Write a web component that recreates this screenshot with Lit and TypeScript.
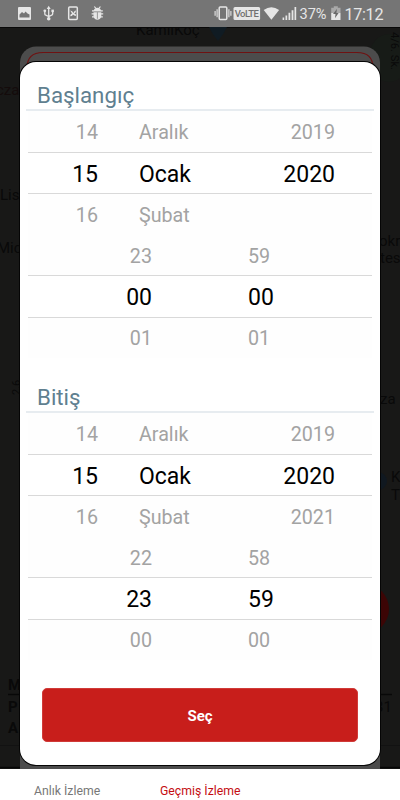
import { LitElement, html, css } from "lit";
import { customElement } from "lit/decorators.js";

@customElement("status-bar")
class StatusBar extends LitElement {
  static styles = css`
    :host { display: block; height: 27px; background: #757575; }
    svg { display: block; }
    text { font-family: Roboto, sans-serif; fill: #e6e6e6; }
  `;
  render() {
    return html`<svg width="400" height="27" viewBox="0 0 400 27" fill="#e6e6e6">
      <path fill-rule="evenodd" d="M19 7h11q1 0 1 1v11q0 1-1 1H19q-1 0-1-1V8q0-1 1-1zM19.5 17.5h10v-3l-2-1-2-2-1.5 2-2-1.5-2.5 2.5z" />
      <g fill="none" stroke="#e6e6e6" stroke-width="1.3">
        <path d="M48.7 8v10M44.8 11v3q0 1 1 1.2l2.9 1.3 3-1.4q1-.4 1-1.4v-2.4" />
      </g>
      <path d="M48.7 5.8l2 3.2h-4z" /><circle cx="48.7" cy="18.8" r="1.8" />
      <circle cx="44.8" cy="10.8" r="1.4" /><path d="M51.4 9.6h2.5v2.5h-2.5z" />
      <rect x="68.7" y="6.9" width="8.6" height="12.6" rx="1" fill="none" stroke="#e6e6e6" stroke-width="1.5" />
      <path d="M70.2 10.6l2 .6 1.2 1.8 1.2-2 1.4-.4-.4 1.8-1.4 1.2 1.6.6.2 1.8-1.8-.4-1.2-1.2-1 1.6-1.8.2.4-1.8 1.4-1z" />
      <path d="M93.6 11.4q.4-3.6 3.8-3.6t3.8 3.6zM93.5 12.2h7.8v3.6q-.5 3.9-3.9 3.9t-3.9-3.9z" />
      <path d="M92 10.8h2M100.8 10.8h2M91.6 13.8h11.6M92 16.8h10.8M94.4 6.5l1.4 1.8M100.4 6.5l-1.4 1.8" stroke="#e6e6e6" stroke-width="1.2" />
      <path d="M97.4 12.2v6.6" stroke="#757575" stroke-width=".7" />

      <rect x="219.2" y="7" width="7.6" height="12.6" rx="1" fill="none" stroke="#e6e6e6" stroke-width="1.5" />
      <path d="M217.1 9.2v8M215.1 11v4.8M228.9 9.2v8M230.9 11v4.8" stroke="#e6e6e6" stroke-width="1.1" />
      <rect x="233.5" y="7" width="26.6" height="13" rx="1.5" />
      <text x="246.8" y="16.9" text-anchor="middle" font-size="9.5" font-weight="500" textLength="24" style="fill:#707070">VoLTE</text>
      <path d="M263.7 10q7.7-5.6 15.4 0l-7.7 9.8z" />
      <path d="M282.6 17.6h1.6V20h-1.6zM285.5 15.4h1.7V20h-1.7zM288.5 12.8h1.8V20h-1.8zM291.6 10.2h1.8V20h-1.8zM294.5 7h1.7v13h-1.7z" />
      <text x="299.5" y="19.2" font-size="14.8" textLength="27" lengthAdjust="spacingAndGlyphs">37%</text>
      <path d="M333.8 6.3h4v1.5h2.7V13h-9.3V7.8h2.6z" fill="#a9a9a9" />
      <path d="M331.2 13h9.3v7h-9.3z" />
      <path d="M337 8.8l-4 5.1h2.5l-.5 4.3 3.6-5.3h-2.2z" fill="#686868" />
      <text x="344.5" y="19.6" font-size="16.2" textLength="39">17:12</text>
    </svg>`;
  }
}

@customElement("wheel-picker")
class WheelPicker extends LitElement {
  static properties = { rows: { attribute: false }, kind: {} };
  declare rows: string[][];
  declare kind: string;
  static styles = css`
    :host { display: block; margin: 0 8px 0 8px; }
    .row { height: 41.2px; box-sizing: border-box; display: grid; align-items: center; color: #a3a3a3; font-size: 19.7px; line-height: 24px; padding-top: 4px; background: #fefefe; }
    .date { grid-template-columns: 70px 1fr 100px 37px; }
    .time { grid-template-columns: 124px 1fr; }
    .row > span:first-child { text-align: right; }
    .date > span:nth-child(2) { padding-left: 41px; }
    .date > span:nth-child(3) { text-align: right; }
    .time > span:nth-child(2) { padding-left: 96px; }
    .selected { position: relative; height: 42.2px; margin-bottom: -1px; color: #000; font-size: 23px; background: #fff; padding-top: 4px; border-top: 1px solid #d9d9d9; border-bottom: 1px solid #d9d9d9; }
  `;
  render() {
    return this.rows.map((r, i) => html`<div class="row ${this.kind} ${i === 1 ? "selected" : ""}">${r.map((c) => html`<span>${c}</span>`)}</div>`);
  }
}

@customElement("app-root")
class AppRoot extends LitElement {
  static styles = css`
    :host { display: flex; flex-direction: column; width: 400px; height: 800px; overflow: hidden; font-family: Roboto, "Noto Sans", sans-serif; background: #fff; }
    .stage { position: relative; height: 742px; background: #181817; overflow: hidden; box-sizing: border-box; padding: 35px 20px 4px; }
    .map { position: absolute; left: 0; top: 0; }
    .map text { fill: #090909; font-family: Roboto, sans-serif; font-size: 15px; }
    .dialog { position: relative; height: 703px; box-sizing: border-box; background: #fff; border-radius: 16px; box-shadow: 0 0 0 1px #050505; padding-top: 16.6px; }
    h2 { margin: 0 6px; padding-left: 11px; height: 30px; line-height: 32px; font-size: 22.3px; font-weight: 400; color: #607f90; border-bottom: 2px solid #e7ecf0; }
    .range { height: 302px; }
    .select { display: block; margin: 5px 22px 0; width: 316px; height: 54px; padding: 2px 0 0; border: 1px solid #d03a38; border-radius: 5px; background: #c81e1b; color: #fff; font: 700 15px Roboto, sans-serif; }
    nav { height: 31px; display: flex; padding-left: 34px; padding-top: 14px; box-sizing: border-box; font-size: 12.25px; line-height: 16px; color: #777; background: #fff; }
    nav span { width: 126px; white-space: nowrap; }
    .active { color: #c40d12; }
  `;
  render() {
    return html`
      <status-bar></status-bar>
      <main class="stage">
        <svg class="map" width="400" height="742" viewBox="0 27 400 742">
          <path d="M0 27.5h400" stroke="#080808" />
          <path d="M0 745.5h20M380 745.5h20" stroke="#121212" fill="none" />
          <ellipse cx="389" cy="58" rx="20" ry="24" fill="#171b17" />
          <text x="136" y="35">KamilKoç</text>
          <path d="M209 27h18q-3 7-9 14q-6-7-9-14z" fill="#101b23" />
          <text x="-4" y="95" style="fill:#140b0b">cza</text>
          <text x="0" y="200">Lis</text><text x="-3" y="253">Mic</text>
          <text x="379" y="246">okra</text><text x="380" y="263">tesi</text>
          <text x="380" y="404">za</text>
          <circle cx="378" cy="481" r="9" fill="#101820" />
          <text x="391" y="482">K</text><text x="391" y="500">T</text>
          <text transform="translate(391 32) rotate(90)" textLength="38" lengthAdjust="spacingAndGlyphs" style="font-size:11.5px">4/6. Sk.</text>
          <text transform="translate(20 395) rotate(-90)" style="font-size:11px">2.6</text>
          <circle cx="364" cy="609" r="25" fill="#3c0505" />
          <g font-weight="700"><text x="8" y="690">M</text><text x="8" y="712">P</text><text x="8" y="733">A</text></g>
          <text x="375" y="712">31</text>
          <path d="M8 694.5h12M380 694.5h12" stroke="#080808" stroke-width="1.3" />
          <path d="M0 767.5h400" stroke="#050505" stroke-width="1.5" />
          <rect x="20" y="46.5" width="360" height="730" rx="16" fill="#4c4c4c" />
          <path d="M27 76V68Q27 52.5 43 52.5H357Q373 52.5 373 68V76" fill="none" stroke="#6f1212" stroke-width="1.2" />
          <path d="M20 740v29h360v-29z" fill="#4c4c4c" />
        </svg>
        <section class="dialog">
          <div class="range">
            <h2>Başlangıç</h2>
            <wheel-picker kind="date" .rows=${[["14", "Aralık", "2019"], ["15", "Ocak", "2020"], ["16", "Şubat"]]}></wheel-picker>
            <wheel-picker kind="time" .rows=${[["23", "59"], ["00", "00"], ["01", "01"]]}></wheel-picker>
          </div>
          <div class="range">
            <h2>Bitiş</h2>
            <wheel-picker kind="date" .rows=${[["14", "Aralık", "2019"], ["15", "Ocak", "2020"], ["16", "Şubat", "2021"]]}></wheel-picker>
            <wheel-picker kind="time" .rows=${[["22", "58"], ["23", "59"], ["00", "00"]]}></wheel-picker>
          </div>
          <button class="select">Seç</button>
        </section>
      </main>
      <nav><span>Anlık İzleme</span><span class="active">Geçmiş İzleme</span></nav>
    `;
  }
}
